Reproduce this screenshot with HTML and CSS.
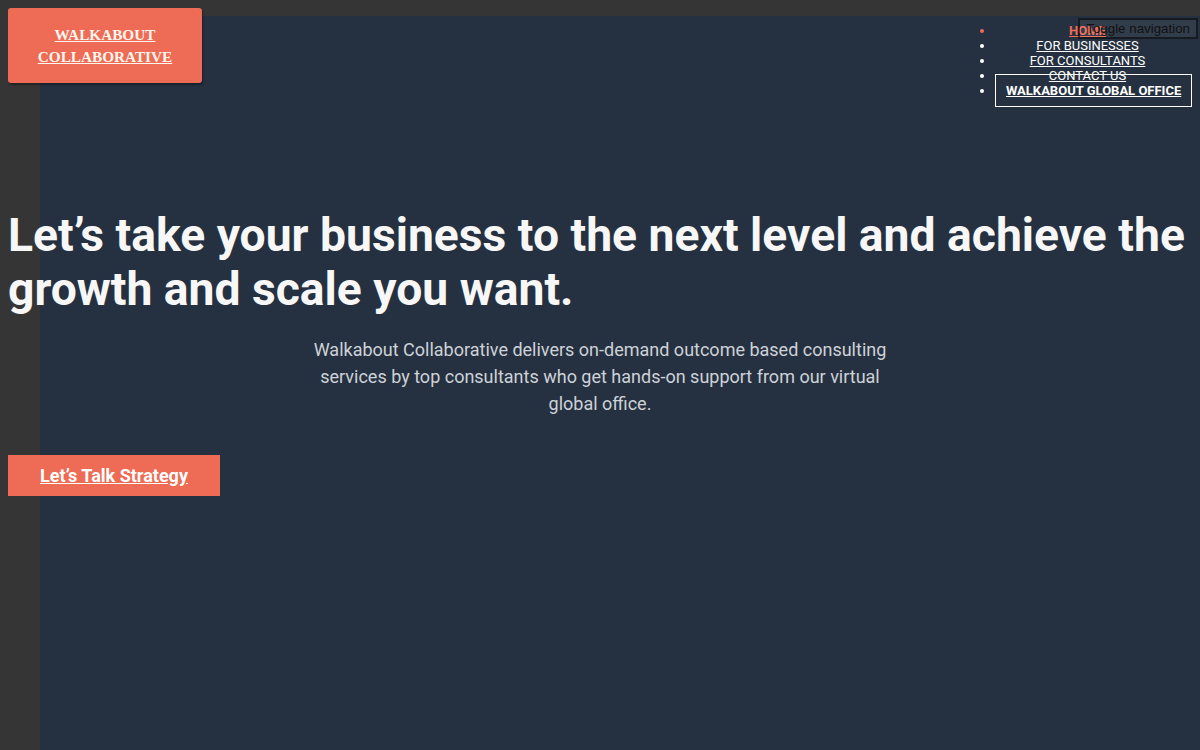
FILE: index.html
```html
<!DOCTYPE html>
<html lang="en">
<head>
<meta charset="utf-8">
<title>Walkabout Collaborative</title>
<link rel="stylesheet" href="styles.css">
</head>
<body>
<div class="backdrop"></div>
<header class="site-header">
  <a class="logo" href="#"><span>WALKABOUT<br>COLLABORATIVE</span></a>
  <nav class="main-nav">
    <button class="nav-toggle" type="button">Toggle navigation</button>
    <ul class="nav-list">
      <li class="active"><a href="#">HOME</a></li>
      <li><a href="#">FOR BUSINESSES</a></li>
      <li><a href="#">FOR CONSULTANTS</a></li>
      <li><a href="#">CONTACT US</a></li>
      <li class="cta"><a href="#">WALKABOUT GLOBAL OFFICE</a></li>
    </ul>
  </nav>
</header>
<main class="hero">
  <h1 class="hero-title">Let’s take your business to the next level and achieve the growth and scale you want.</h1>
  <p class="hero-text">Walkabout Collaborative delivers on-demand outcome based consulting services by top consultants who get hands-on support from our virtual global office.</p>
  <a class="hero-btn" href="#">Let’s Talk Strategy</a>
</main>
</body>
</html>
```
FILE: styles.css
```css
html, body {
  margin: 0;
  padding: 0;
}
body {
  background: #353535;
  min-height: 750px;
  font-family: Roboto, "Liberation Sans", Arial, sans-serif;
  color: #fff;
  position: relative;
  overflow: hidden;
}
.backdrop {
  position: absolute;
  left: 40px;
  top: 16px;
  right: 0;
  bottom: 0;
  background: #253140;
  z-index: 0;
}
.site-header, .hero {
  position: relative;
  z-index: 1;
}
.site-header {
  display: flex;
  justify-content: space-between;
  align-items: flex-start;
}
.logo {
  margin: 8px;
  width: 194px;
  height: 75px;
  box-sizing: border-box;
  background: #ee6b55;
  border-radius: 3px;
  box-shadow: 1px 2px 2px rgba(0,0,0,0.35);
  display: flex;
  align-items: center;
  justify-content: center;
  text-align: center;
  color: #fff6ee;
  font-family: "Liberation Serif", "Times New Roman", serif;
  font-weight: 700;
  font-size: 15.25px;
  line-height: 22px;
  text-decoration: underline;
}
.main-nav {
  position: relative;
}
.nav-toggle {
  position: absolute;
  top: 18px;
  right: 2px;
  font-family: Arial, "Liberation Sans", sans-serif;
  font-size: 13.33px;
  color: #111;
  background: rgba(255,255,255,0.06);
  border: 2px solid rgba(0,0,0,0.55);
  padding: 1px 6px;
  z-index: 2;
  white-space: nowrap;
}
.nav-list {
  margin: 23px 20px 0 0;
  padding: 0;
  width: 185px;
  list-style: disc;
  text-align: center;
  font-size: 13px;
  line-height: 15px;
  color: #fff;
}
.nav-list a {
  color: #fff;
  text-decoration: underline;
}
.nav-list li.active {
  color: #ee6b55;
}
.nav-list li.active a {
  color: #ee6b55;
  font-weight: 700;
}
.nav-list li.cta a {
  font-weight: 700;
  white-space: nowrap;
  padding: 8px 10px;
  border: 1px solid #fff;
}
.hero {
  padding-top: 110px;
}
.hero-title {
  margin: 0 8px;
  font-size: 46.25px;
  line-height: 54px;
  font-weight: 700;
  color: #f7f7f7;
}
.hero-text {
  max-width: 580px;
  margin: 20px auto 0;
  text-align: center;
  font-size: 18px;
  line-height: 27px;
  color: #ced2d8;
}
.hero-btn {
  display: inline-block;
  margin: 38px 0 0 8px;
  height: 41px;
  line-height: 41px;
  padding: 0 32px;
  background: #ee6b55;
  color: #fff;
  font-size: 18px;
  font-weight: 700;
  text-decoration: underline;
}
```
